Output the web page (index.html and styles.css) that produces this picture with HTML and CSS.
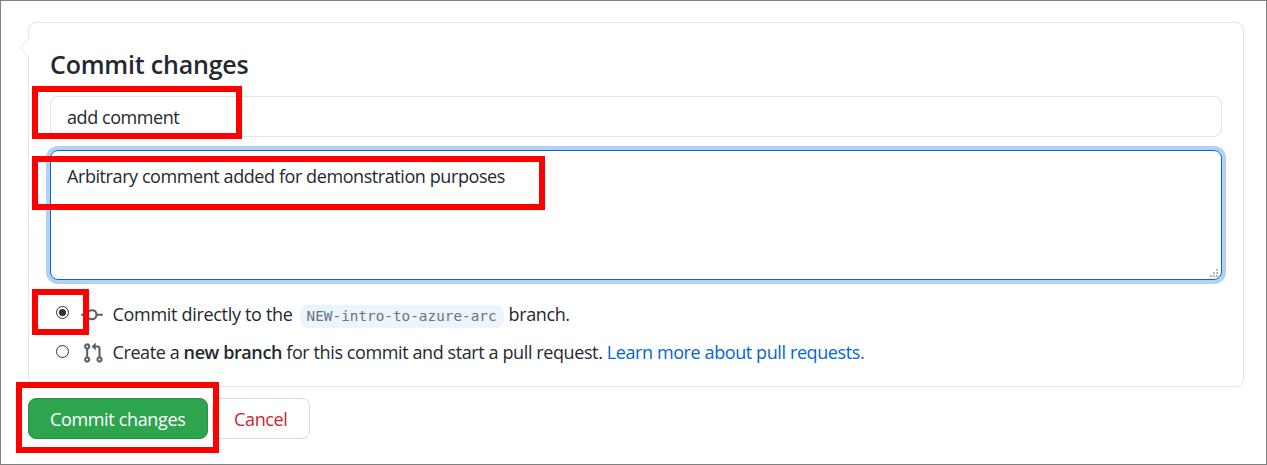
FILE: index.html
```html
<!DOCTYPE html>
<html lang="en">
<head>
<meta charset="utf-8">
<title>Commit changes</title>
<link rel="stylesheet" href="styles.css">
</head>
<body>
<main class="page">
  <form class="commit-form">
    <section class="panel">
      <svg class="caret" width="10" height="20" viewBox="0 0 10 20"><path d="M10 0.5 0.7 9.8 10 19.1" fill="#fff" stroke="#e1e4e8"/></svg>
      <h1 class="title">Commit changes</h1>
      <div class="field summary">add comment</div>
      <div class="field description">Arbitrary comment added for demonstration purposes
        <svg class="grip" width="8" height="8" viewBox="0 0 8 8" fill="#b8b8b8" shape-rendering="crispEdges"><path d="M6 0h2v2H6zM3 3h2v2H3zM6 3h2v2H6zM0 6h2v2H0zM3 6h2v2H3zM6 6h2v2H6z"/></svg>
      </div>
      <div class="choice">
        <svg class="radio" width="13" height="13" viewBox="0 0 13 13"><circle cx="6.5" cy="6.5" r="6" fill="#fff" stroke="#333"/><circle cx="6.5" cy="6.5" r="3.6" fill="#333"/></svg>
        <svg class="icon" width="22" height="22" viewBox="0 0 16 16"><path fill-rule="evenodd" d="M10.5 7.75a2.5 2.5 0 11-5 0 2.5 2.5 0 015 0zm1.43.75a4.002 4.002 0 01-7.86 0H.75a.75.75 0 110-1.5h3.32a4.001 4.001 0 017.86 0h3.32a.75.75 0 110 1.5h-3.32z"/></svg>
        <span class="label direct">Commit directly to the</span><code class="branch">NEW-intro-to-azure-arc</code><span class="label">branch.</span>
      </div>
      <div class="choice second">
        <svg class="radio" width="13" height="13" viewBox="0 0 13 13"><circle cx="6.5" cy="6.5" r="6" fill="#fff" stroke="#333"/></svg>
        <svg class="icon" width="22" height="22" viewBox="0 0 16 16"><path fill-rule="evenodd" d="M7.177 3.073L9.573.677A.25.25 0 0110 .854v4.792a.25.25 0 01-.427.177L7.177 3.427a.25.25 0 010-.354zM3.75 2.5a.75.75 0 100 1.5.75.75 0 000-1.5zm-2.25.75a2.25 2.25 0 113 2.122v5.256a2.251 2.251 0 11-1.5 0V5.372A2.25 2.25 0 011.5 3.25zM11 2.5h-1V4h1a1 1 0 011 1v5.628a2.251 2.251 0 101.5 0V5A2.5 2.5 0 0011 2.5zm1 10.25a.75.75 0 111.5 0 .75.75 0 01-1.5 0zM3.75 12a.75.75 0 100 1.5.75.75 0 000-1.5z"/></svg>
        <span class="label">Create a <b>new branch</b> for this commit and start a pull request. <a class="link">Learn more about pull requests.</a></span>
      </div>
    </section>
    <div class="actions">
      <div class="button primary">Commit changes</div>
      <div class="button cancel">Cancel</div>
    </div>
  </form>
  <div class="mark mark-summary"></div>
  <div class="mark mark-description"></div>
  <div class="mark mark-radio"></div>
  <div class="mark mark-submit"></div>
</main>
</body>
</html>
```

FILE: styles.css
```css
* { box-sizing: border-box; }
body { margin: 0; background: #fff; }
.page {
  position: relative;
  width: 1267px;
  height: 465px;
  padding: 21px 22px 0 27px;
  border: 1px solid #808080;
  overflow: hidden;
  font: 18px/26px "Open Sans", "Noto Sans", sans-serif;
  letter-spacing: -0.35px;
  color: #24292e;
  white-space: nowrap;
}
.panel {
  position: relative;
  width: 1216px;
  height: 365px;
  padding: 25px 21px 0;
  border: 1px solid #e1e4e8;
  border-radius: 8px;
}
.caret { position: absolute; left: -10px; top: 15px; }
.title {
  margin: 0;
  height: 48px;
  font-size: 25px;
  line-height: 32px;
  font-weight: 600;
  letter-spacing: -0.2px;
}
.field {
  width: 1172px;
  padding: 7px 16px;
  border: 1px solid #e1e4e8;
  border-radius: 8px;
}
.summary { height: 41px; letter-spacing: -0.43px; }
.description {
  position: relative;
  height: 130px;
  margin-top: 13px;
  padding-top: 12px;
  border-color: #0366d6;
  box-shadow: 0 0 0 4px #b3d1f3;
  letter-spacing: -0.42px;
}
.grip { position: absolute; right: 3px; bottom: 2px; }
.choice {
  display: flex;
  align-items: center;
  height: 26px;
  margin-top: 22px;
  padding-left: 6px;
  letter-spacing: -0.4px;
}
.label { padding-bottom: 2px; }
.direct { letter-spacing: -0.31px; }
.second { margin-top: 12px; }
.radio { margin: -5px 12px 0 0; }
.second .radio { margin-top: -3px; }
.icon { margin-right: 9.5px; fill: #586069; }
.second .icon { margin-left: 0.5px; margin-right: 9px; }
.branch {
  height: 23px;
  width: 204px;
  margin: 3px 5px 0 7px;
  padding-left: 7px;
  border-radius: 8px;
  background: #eaf5ff;
  color: #6a737d;
  font: 14.35px/23px "DejaVu Sans Mono", monospace;
  letter-spacing: 0;
}
b { font-weight: 600; }
.link { color: #0366d6; }
.actions { display: flex; gap: 4px; margin-top: 11px; }
.button {
  height: 41px;
  padding: 7px 21px;
  border: 1px solid #d9dbde;
  border-radius: 8px;
}
.primary { width: 180px; background: #2ea44f; border-color: #2a9147; color: #fff; }
.cancel { width: 98px; color: #cb2431; }
.mark { position: absolute; border: 6px solid #f00; }
.mark-summary { left: 31px; top: 85px; width: 210px; height: 53px; }
.mark-description { left: 31px; top: 155px; width: 513px; height: 54px; }
.mark-radio { left: 31px; top: 288px; width: 57px; height: 46px; }
.mark-submit { left: 15px; top: 381px; width: 203px; height: 71px; }
```
